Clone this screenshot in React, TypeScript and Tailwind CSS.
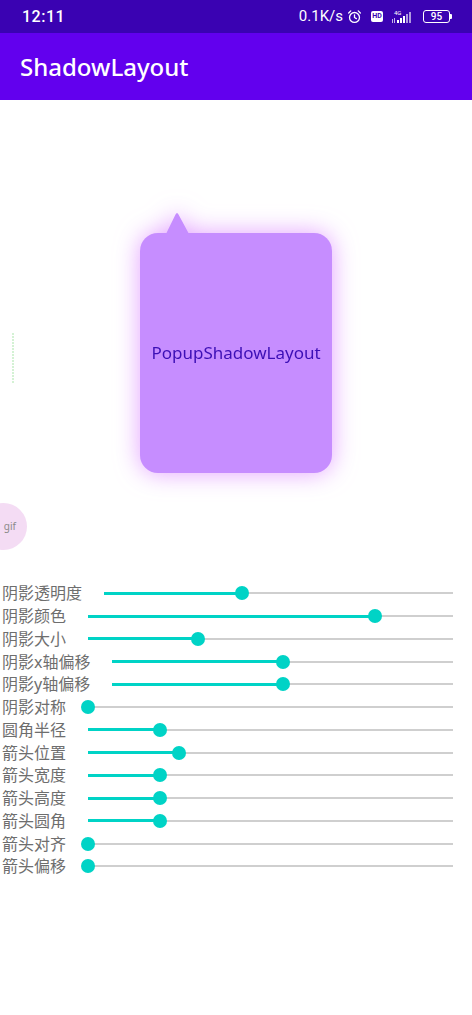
import type { ReactNode } from "react";

const sliders = [
  { label: "阴影透明度", value: 0.394 },
  { label: "阴影颜色", value: 0.786 },
  { label: "阴影大小", value: 0.3 },
  { label: "阴影x轴偏移", value: 0.5 },
  { label: "阴影y轴偏移", value: 0.5 },
  { label: "阴影对称", value: 0 },
  { label: "圆角半径", value: 0.197 },
  { label: "箭头位置", value: 0.249 },
  { label: "箭头宽度", value: 0.197 },
  { label: "箭头高度", value: 0.197 },
  { label: "箭头圆角", value: 0.197 },
  { label: "箭头对齐", value: 0 },
  { label: "箭头偏移", value: 0 },
];

function StatusBar() {
  return (
    <div className="flex h-[33px] items-center justify-between bg-[#3a02b2] pl-[22px] pr-[20px] text-white">
      <span className="text-[16px] font-medium tracking-[0.5px]" style={{ fontFamily: "Roboto, sans-serif" }}>
        12:11
      </span>
      <div className="flex items-center">
        <span className="text-[15px]" style={{ fontFamily: "Roboto, sans-serif" }}>
          0.1K/s
        </span>
        <svg width="15" height="15" viewBox="0 0 16 16" fill="none" stroke="white" strokeWidth="1.4" className="ml-[4px]">
          <circle cx="8" cy="9" r="5.3" />
          <path d="M8 6.2V9l2 1.3" strokeLinecap="round" />
          <path d="M1.8 4.2 4 2M14.2 4.2 12 2" strokeLinecap="round" />
        </svg>
        <div className="ml-[9px] flex h-[11px] w-[12px] items-center justify-center rounded-[2px] bg-white">
          <span className="text-[7px] font-bold leading-none text-[#3a02b2]" style={{ fontFamily: "Roboto, sans-serif" }}>
            HD
          </span>
        </div>
        <svg width="24" height="16" viewBox="0 0 24 16" className="ml-[8px]">
          <text x="3" y="6" fontSize="6" fill="white" fontFamily="Roboto, sans-serif">4G</text>
          <rect x="1" y="10" width="1" height="4" fill="white" opacity="0.7" />
          <rect x="3" y="9" width="1" height="5" fill="white" opacity="0.7" />
          <rect x="6" y="11" width="2" height="3" fill="white" />
          <rect x="9" y="9" width="2" height="5" fill="white" />
          <rect x="12" y="7" width="2" height="7" fill="white" />
          <rect x="15" y="5" width="2" height="9" fill="white" opacity="0.6" />
          <rect x="18" y="3" width="2" height="11" fill="white" opacity="0.6" />
        </svg>
        <div className="ml-[8px] flex items-center">
          <div className="flex h-[13px] w-[27px] items-center justify-center rounded-[3px] border border-white">
            <span className="text-[10px] font-medium leading-none" style={{ fontFamily: "Roboto, sans-serif" }}>
              95
            </span>
          </div>
          <div className="h-[5px] w-[2px] rounded-r-[1px] bg-white" />
        </div>
      </div>
    </div>
  );
}

function Slider({ label, value }: { label: string; value: number }) {
  return (
    <div className="flex h-[22.75px] items-center">
      <span className="whitespace-nowrap text-[16px] leading-none text-[#6e6e6e]">{label}</span>
      <div className="relative ml-[22px] mr-[19px] h-[14px] flex-1">
        <div className="absolute left-0 right-0 top-[6px] h-[2px] bg-[#cfcfcf]" />
        <div className="absolute left-0 top-[5.5px] h-[3px] bg-[#00d3c6]" style={{ width: `${value * 100}%` }} />
        <div
          className="absolute top-0 h-[14px] w-[14px] -translate-x-1/2 rounded-full bg-[#00d3c6]"
          style={{ left: `${value * 100}%` }}
        />
      </div>
    </div>
  );
}

function Bubble({ children }: { children: ReactNode }) {
  return (
    <div className="flex flex-col drop-shadow-[0_0_12px_rgba(215,120,255,0.7)]">
      <svg width="60" height="23" viewBox="0 0 60 23" className="-mb-px">
        <path d="M26 23 L35.5 3.5 Q37 0.5 38.5 3.5 L49 23 Z" fill="#c68dff" />
      </svg>
      <div className="flex h-[240px] w-[192px] items-center justify-center rounded-[18px] bg-[#c68dff]">
        {children}
      </div>
    </div>
  );
}

export default function App() {
  return (
    <div
      className="relative h-[1015px] w-[472px] overflow-hidden bg-white"
      style={{ fontFamily: '"Noto Sans", "Noto Sans CJK SC", sans-serif' }}
    >
      <StatusBar />
      <div className="flex h-[67px] items-center bg-[#6200ee] pl-[20px]">
        <h1 className="text-[24px] font-medium text-white">ShadowLayout</h1>
      </div>

      <div className="flex justify-center pt-[111px]">
        <Bubble>
          <span className="text-[17px] text-[#3c0fb6]">PopupShadowLayout</span>
        </Bubble>
      </div>

      <div className="mt-[109px] flex flex-col pl-[2px]">
        {sliders.map((s) => (
          <Slider key={s.label} label={s.label} value={s.value} />
        ))}
      </div>

      <div className="absolute left-[12px] top-[333px] h-[50px] w-[2px] bg-[repeating-linear-gradient(#d4f2d4_0_2px,transparent_2px_3px)]" />
      <div className="absolute left-[-20px] top-[503px] flex h-[47px] w-[47px] items-center justify-end rounded-full bg-[#f4dcf4] pr-[11px]">
        <span className="text-[10px] text-[#8a8a8a]">gif</span>
      </div>
    </div>
  );
}
